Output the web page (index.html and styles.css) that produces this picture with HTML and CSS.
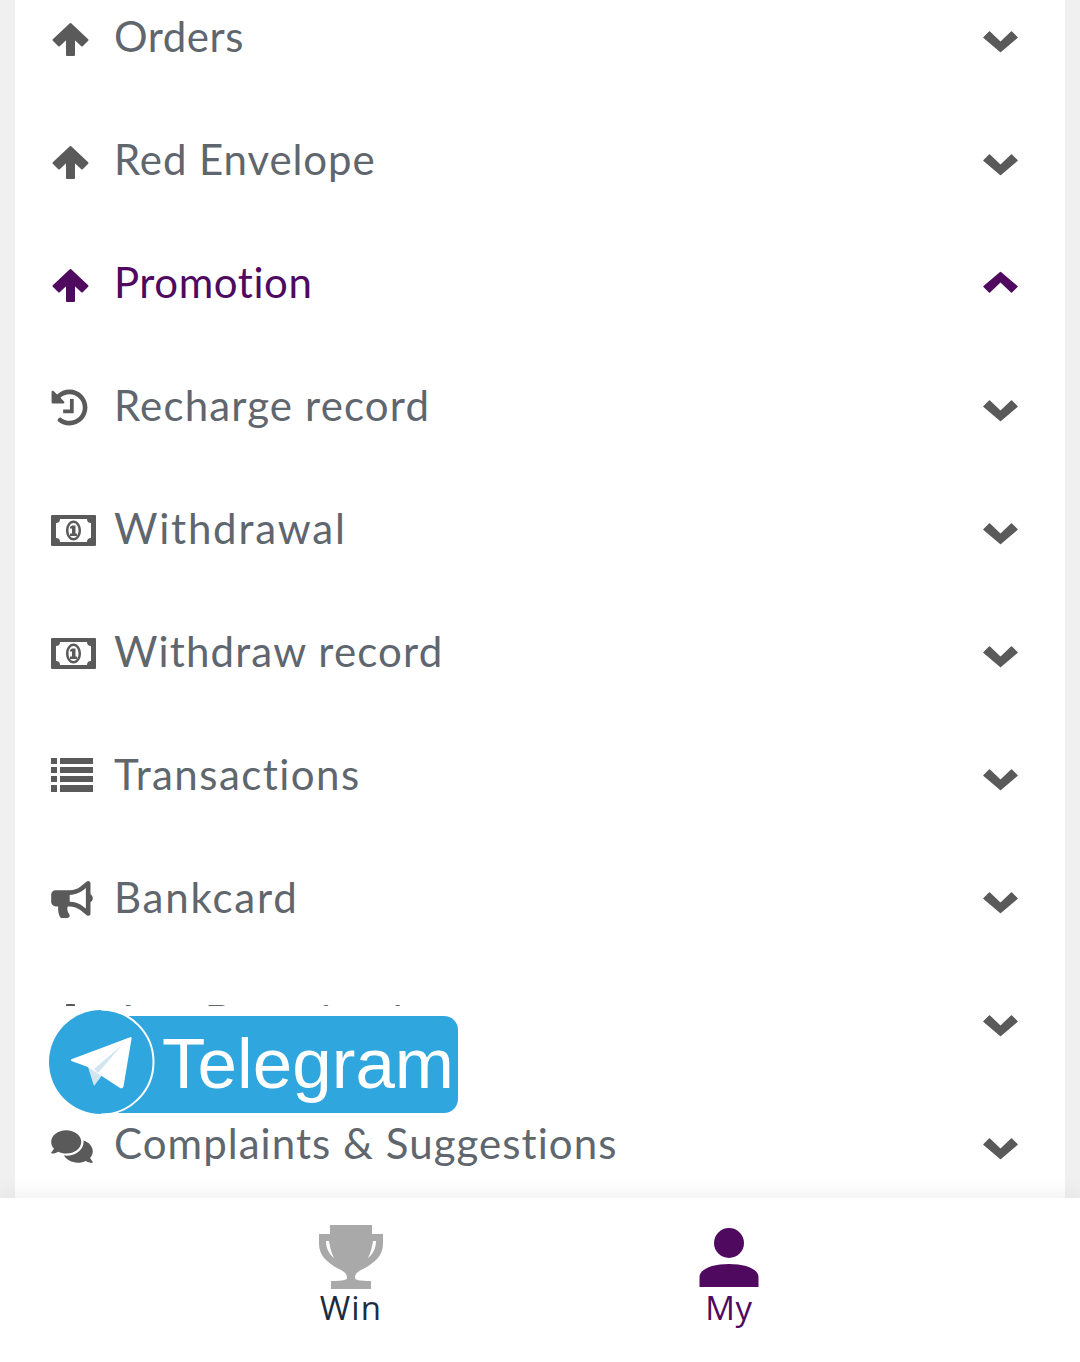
FILE: index.html
```html
<!DOCTYPE html>
<html lang="en">
<head>
<meta charset="utf-8">
<title>My</title>
<link rel="stylesheet" href="styles.css">
</head>
<body>
<svg class="defs" aria-hidden="true">
  <symbol id="i-up" viewBox="0 0 37 35"><path stroke-width="2" stroke-linejoin="round" d="M18.500 2 35.500 18 30 23.500 22 16V33H15V16L7 23.500 1.500 18z"/></symbol>
  <symbol id="i-down-chev" viewBox="0 0 35 23"><path stroke-width="1.500" stroke-linejoin="round" d="M1 7.500 6.500 2 17.500 12.500 28.500 2 34 7.500 17.500 21.500z"/></symbol>
  <symbol id="i-up-chev" viewBox="0 0 35 23"><path stroke-width="1.500" stroke-linejoin="round" d="M1 15.500 6.500 21 17.500 10.500 28.500 21 34 15.500 17.500 1.500z"/></symbol>
  <symbol id="i-history" viewBox="0 0 512 512"><path d="M504 255.531c.253 136.64-111.18 248.372-247.82 248.468-59.015.042-113.223-20.53-155.822-54.911-11.077-8.94-11.905-25.541-1.839-35.607l11.267-11.267c8.609-8.609 22.353-9.551 31.891-1.984C173.062 425.135 212.781 440 256 440c101.705 0 184-82.311 184-184 0-101.705-82.311-184-184-184-48.814 0-93.149 18.969-126.068 49.932l50.754 50.754c10.08 10.08 2.941 27.314-11.313 27.314H24c-8.837 0-16-7.163-16-16V38.627c0-14.254 17.234-21.393 27.314-11.314l49.372 49.372C129.209 34.136 189.552 8 256 8c136.81 0 247.747 110.78 248 247.531z"/><path d="M262 140h52v195H168v-52h94z"/></symbol>
  <symbol id="i-money" viewBox="0 0 45 31"><path fill-rule="evenodd" d="M1 0h43a1 1 0 0 1 1 1v29a1 1 0 0 1-1 1H1a1 1 0 0 1-1-1V1a1 1 0 0 1 1-1zM9 4a4 4 0 0 1-4 4v15a4 4 0 0 1 4 4h27a4 4 0 0 1 4-4V8a4 4 0 0 1-4-4z"/><path fill-rule="evenodd" d="M22.500 5.500c4.200 0 7.500 4.500 7.500 10s-3.300 10-7.500 10-7.500-4.500-7.500-10 3.300-10 7.500-10zm0 2.500c-2.800 0-5 3.400-5 7.500s2.200 7.500 5 7.500 5-3.400 5-7.500-2.200-7.500-5-7.500z"/><path d="M21 10.500h3.500v8h1.500V21h-7v-2.500h2v-5h-2v-1.500z"/></symbol>
  <symbol id="i-list" viewBox="0 0 42 34"><path d="M0 0h6v6H0zM9 0h33v6H9zM0 9h6v6H0zM9 9h33v6H9zM0 18h6v6H0zM9 18h33v6H9zM0 27h6v7H0zM9 27h33v7H9z"/></symbol>
  <symbol id="i-horn" viewBox="0 0 576 512"><path d="M576 240c0-23.630-12.950-44.040-32-55.120V32.010C544 23.260 537.020 0 512 0c-7.120 0-14.190 2.380-19.980 7.020l-85.030 68.030C364.280 109.190 310.660 128 256 128H64c-35.350 0-64 28.650-64 64v96c0 35.350 28.650 64 64 64h33.700c-1.390 10.480-2.180 21.140-2.180 32 0 39.770 9.260 77.350 25.560 110.940 5.190 10.690 16.520 17.060 28.400 17.060h74.280c26.050 0 41.690-29.840 25.900-50.560-16.400-21.520-26.150-48.360-26.150-77.440 0-11.110 1.620-21.790 4.410-32H256c54.660 0 108.280 18.810 150.980 52.950l85.030 68.030a32.023 32.023 0 0 0 19.980 7.020c24.920 0 32-22.780 32-32V295.130C563.050 284.040 576 263.630 576 240zm-96 141.420l-33.050-26.440C392.950 311.780 325.120 288 256 288v-96c69.120 0 136.950-23.780 190.950-66.980L480 98.580v282.840z"/></symbol>
  <symbol id="i-comments" viewBox="0 0 576 512"><path d="M416 192c0-88.400-93.100-160-208-160S0 103.600 0 192c0 34.300 14.100 65.900 38 92-13.400 30.200-35.500 54.200-35.800 54.500-2.200 2.300-2.800 5.700-1.500 8.700S4.800 352 8 352c36.600 0 66.900-12.300 88.700-25 32.200 15.700 70.300 25 111.300 25 114.900 0 208-71.600 208-160zm122 220c23.900-26 38-57.700 38-92 0-66.900-53.500-124.200-129.300-148.100.9 6.600 1.300 13.300 1.300 20.100 0 105.900-107.700 192-240 192-10.800 0-21.300-.8-31.700-1.900C207.800 439.600 281.800 480 368 480c41 0 79.100-9.200 111.300-25 21.800 12.700 52.100 25 88.700 25 3.200 0 6.100-1.900 7.300-4.800 1.300-2.900.7-6.300-1.500-8.700-.3-.3-22.400-24.200-35.800-54.500z"/></symbol>
</svg>

<div class="app">
  <main class="scroller">
    <ul class="card">
      <li class="row"><svg class="ico ico-up"><use href="#i-up"/></svg><span class="label">Orders</span><svg class="chev"><use href="#i-down-chev"/></svg></li>
      <li class="row"><svg class="ico ico-up"><use href="#i-up"/></svg><span class="label sp-1">Red Envelope</span><svg class="chev"><use href="#i-down-chev"/></svg></li>
      <li class="row row-active"><svg class="ico ico-up"><use href="#i-up"/></svg><span class="label">Promotion</span><svg class="chev chev-up"><use href="#i-up-chev"/></svg></li>
      <li class="row"><svg class="ico ico-history"><use href="#i-history"/></svg><span class="label sp-2">Recharge record</span><svg class="chev"><use href="#i-down-chev"/></svg></li>
      <li class="row"><svg class="ico ico-money"><use href="#i-money"/></svg><span class="label sp-4">Withdrawal</span><svg class="chev"><use href="#i-down-chev"/></svg></li>
      <li class="row"><svg class="ico ico-money"><use href="#i-money"/></svg><span class="label sp-2">Withdraw record</span><svg class="chev"><use href="#i-down-chev"/></svg></li>
      <li class="row"><svg class="ico ico-list"><use href="#i-list"/></svg><span class="label sp-3">Transactions</span><svg class="chev"><use href="#i-down-chev"/></svg></li>
      <li class="row"><svg class="ico ico-horn"><use href="#i-horn"/></svg><span class="label sp-4">Bankcard</span><svg class="chev"><use href="#i-down-chev"/></svg></li>
      <li class="row"><svg class="ico ico-up ico-flip"><use href="#i-up"/></svg><span class="label sp-2">App Download</span><svg class="chev"><use href="#i-down-chev"/></svg></li>
      <li class="row"><svg class="ico ico-comments"><use href="#i-comments"/></svg><span class="label sp-5">Complaints &amp; Suggestions</span><svg class="chev"><use href="#i-down-chev"/></svg></li>
    </ul>
  </main>

  <a class="telegram">
    <span class="tg-pill">Telegram</span>
    <svg class="tg-seal" viewBox="0 0 109 106">
      <circle cx="52" cy="53" r="52" fill="#2fa6dd"/>
      <path d="M52 0.500a52.500 52.500 0 0 1 0 105" fill="none" stroke="#fff" stroke-width="2"/>
      <path d="M82 28 23 51l16 7 6 19z" fill="#d2e5f1"/>
      <path d="M82 28 39 58l32 21c1.500.8 3 .2 3.500-1.500L82.500 30c.3-1.400-.2-2.200-.5-2z" fill="#fff"/>
      <path d="M82 28 23 50c-1.500.7-1.400 1.800 0 2.300l16 5.700z" fill="#fff"/>
      <path d="M73 36 45 60l4 4z" fill="#d2e5f1"/>
    </svg>
  </a>

  <nav class="tabbar">
    <a class="tab">
      <svg class="tab-ico" viewBox="0 0 64 64"><path fill="#a9a9a9" fill-rule="evenodd" d="M11 0h42v9h11v10c0 11-8 19-20 25-6 3-8 5-8 9 0 2 4 3 16 3v8H12v-8c12 0 16-1 16-3 0-4-2-6-8-9C8 38 0 30 0 19V9h11zM7 16c0 7 3 13 8 17-3-6-4-11-5-17zm50 0h-3c-1 6-2 11-5 17 5-4 8-10 8-17z"/></svg>
      <span class="tab-label">Win</span>
    </a>
    <a class="tab tab-on">
      <svg class="tab-ico" viewBox="0 0 64 64"><circle cx="32" cy="18" r="15" fill="#4f0a5f"/><path fill="#4f0a5f" d="M2.500 62V52c0-8 13-13 29.500-13s29.500 5 29.500 13v10z"/></svg>
      <span class="tab-label">My</span>
    </a>
  </nav>
</div>
</body>
</html>
```

FILE: styles.css
```css
* { box-sizing: border-box; }
html, body { margin: 0; padding: 0; }
body { font-family: "Lato", "Noto Sans", sans-serif; background: #f0f0f0; }
.defs { display: none; }
.app { position: relative; width: 1080px; height: 1362px; display: flex; flex-direction: column; overflow: hidden; }
.scroller { flex: 1; min-height: 0; overflow: hidden; padding: 0 15px; }
.card { list-style: none; margin: -26px 0 0; padding: 0; background: #fff; }
.row { display: flex; align-items: center; height: 123px; padding: 0 47px 0 36px; color: #5f666e; fill: #5a5a5a; stroke: #5a5a5a; }
.row-active { color: #4f0a5f; fill: #4f0a5f; stroke: #4f0a5f; }
.ico { flex: none; display: block; stroke: none; }
.label { flex: 1; font-size: 42px; line-height: 50px; letter-spacing: 0.55px; white-space: nowrap; }
.sp-1 { letter-spacing: 0.9px; }
.sp-2 { letter-spacing: 1.15px; }
.sp-3 { letter-spacing: 1.45px; }
.sp-4 { letter-spacing: 1.8px; }
.sp-5 { letter-spacing: 1.05px; }
.ico-up { width: 37px; height: 35px; margin: 7px 25px 0 1px; }
.row .ico-up { stroke: #5a5a5a; }
.row-active .ico-up { stroke: #4f0a5f; }
.ico-flip { transform: rotate(180deg); margin-top: 1px; }
.ico-history { width: 37px; height: 37px; margin: 6px 26px 0 0; }
.ico-money { width: 45px; height: 31px; margin: 6px 18px 0 0; }
.ico-list { width: 42px; height: 34px; margin: 3px 21px 0 0; }
.ico-horn { width: 42px; height: 37px; margin: 6px 21px 0 0; }
.ico-comments { width: 42px; height: 37px; margin: 8px 21px 0 0; }
.chev { flex: none; width: 35px; height: 23px; margin-top: 11px; }
.chev-up { margin-top: 1px; }
.telegram { position: absolute; left: 49px; top: 1006px; width: 409px; height: 110px; background: #fff; }
.tg-pill { display: block; margin: 10px 0 0 50px; height: 97px; padding-left: 63px; border-radius: 14px; background: #2fa6dd; color: #fff; font-family: "Liberation Sans", Arial, sans-serif; font-size: 71px; line-height: 95px; overflow: hidden; }
.tg-seal { position: absolute; left: 0; top: 3px; width: 109px; height: 106px; }
.tabbar { position: relative; flex: none; height: 164px; display: grid; grid-template-columns: 1fr 1fr; padding: 27px 162px 0; background: #fff; box-shadow: 0 -2px 22px rgba(0, 0, 0, .07); }
.tab { display: flex; flex-direction: column; align-items: center; }
.tab-ico { display: block; width: 64px; height: 64px; }
.tab-label { font-family: "Open Sans", sans-serif; font-size: 33px; line-height: 38px; letter-spacing: 1.2px; color: #1b2c42; }
.tab-on .tab-label { color: #4f0a5f; letter-spacing: 0.6px; }
```
